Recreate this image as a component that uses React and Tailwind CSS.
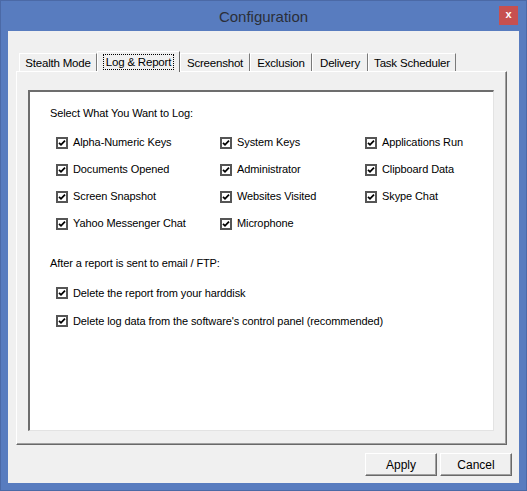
import React from "react";

const font = { fontFamily: '"Liberation Sans", Arial, sans-serif' };

function Check({ label }) {
  return (
    <div className="flex items-center gap-[5px] h-full">
      <svg width="12" height="12" viewBox="0 0 12 12" className="shrink-0">
        <rect x="0" y="0" width="12" height="12" fill="#555555" />
        <rect x="2" y="2" width="8" height="8" fill="#ffffff" />
        <path d="M3 5.8 L5 7.8 L9 3.6" fill="none" stroke="#000" strokeWidth="1.8" />
      </svg>
      <span className="text-[11px] leading-[15px] tracking-[-0.1px] text-black whitespace-nowrap">{label}</span>
    </div>
  );
}

const tabs = [
  { name: "Stealth Mode", w: "w-[78px]" },
  { name: "Log & Report", w: "w-[83px]", sel: true },
  { name: "Screenshot", w: "w-[70px]" },
  { name: "Exclusion", w: "w-[62px]" },
  { name: "Delivery", w: "w-[56px]" },
  { name: "Task Scheduler", w: "w-[88px]" },
];

const items = [
  "Alpha-Numeric Keys", "System Keys", "Applications Run",
  "Documents Opened", "Administrator", "Clipboard Data",
  "Screen Snapshot", "Websites Visited", "Skype Chat",
  "Yahoo Messenger Chat", "Microphone", null,
];

export default function App() {
  return (
    <div style={font} className="w-[527px] h-[491px] bg-[#587cbf] border border-[#4b69a6] flex flex-col overflow-hidden">
      <div className="h-[30px] relative flex items-center justify-center shrink-0">
        <span className="text-[15px] text-[#2b2f38] mt-[2px]">Configuration</span>
        <div className="absolute right-[8px] top-[5px] w-[19px] h-[19px] bg-[#c75050] flex items-center justify-center">
          <span className="text-white text-[11px] font-bold leading-none mb-[2px]">x</span>
        </div>
      </div>
      <div className="mx-[7px] mb-[7px] flex-1 bg-[#f0f0f0] flex flex-col">
        <div className="pt-[20px] pl-[11px] flex items-end h-[41px] relative z-10 -mb-px">
          {tabs.map((t) =>
            t.sel ? (
              <div key={t.name} className={`${t.w} h-[21px] bg-[#f0f0f0] border-t border-l border-white border-r border-r-[#696969] flex items-center justify-center`}>
                <span className="text-[11.5px] leading-[14px] tracking-[-0.2px] text-black border border-dotted border-black px-[2px]">{t.name}</span>
              </div>
            ) : (
              <div key={t.name} className={`${t.w} h-[18px] bg-[#f0f0f0] border-t border-l border-white border-r border-r-[#7a7a7a] flex items-center justify-center mb-px`}>
                <span className="text-[11.5px] leading-[14px] tracking-[-0.2px] text-black">{t.name}</span>
              </div>
            )
          )}
        </div>
        <div className="ml-[8px] mr-[12px] h-[374px] border-t border-l border-white border-r border-b border-r-[#696969] border-b-[#696969] shadow-[inset_-1px_-1px_0_#a0a0a0] flex pt-[18px] pl-[11px] pr-[12px] pb-[13px]">
          <div className="flex-1 bg-white border-t-2 border-l-2 border-t-[#6d6d6d] border-l-[#6d6d6d] border-r border-b border-r-[#e3e3e3] border-b-[#e3e3e3] flex flex-col">
            <div className="pt-[14px] pl-[20px] text-[11px] leading-[15px] tracking-[-0.1px] text-black">Select What You Want to Log:</div>
            <div className="mt-[8px] ml-[26px] grid grid-cols-[164px_145px_1fr] auto-rows-[27px]">
              {items.map((it, i) => (
                <div key={i} className="h-[27px]">{it && <Check label={it} />}</div>
              ))}
            </div>
            <div className="mt-[19px] pl-[20px] text-[11px] leading-[15px] tracking-[-0.1px] text-black">After a report is sent to email / FTP:</div>
            <div className="mt-[8px] ml-[26px] flex flex-col">
              <div className="h-[28px]"><Check label="Delete the report from your harddisk" /></div>
              <div className="h-[28px]"><Check label="Delete log data from the software's control panel (recommended)" /></div>
            </div>
          </div>
        </div>
        <div className="mt-[8px] flex justify-end gap-[3px] pr-[7px]">
          {["Apply", "Cancel"].map((b) => (
            <div key={b} className="w-[72px] h-[23px] bg-[#f0f0f0] border-t border-l border-white border-r border-b border-r-[#696969] border-b-[#696969] shadow-[inset_-1px_-1px_0_#a0a0a0] flex items-center justify-center">
              <span className="text-[12px] text-black">{b}</span>
            </div>
          ))}
        </div>
      </div>
    </div>
  );
}
